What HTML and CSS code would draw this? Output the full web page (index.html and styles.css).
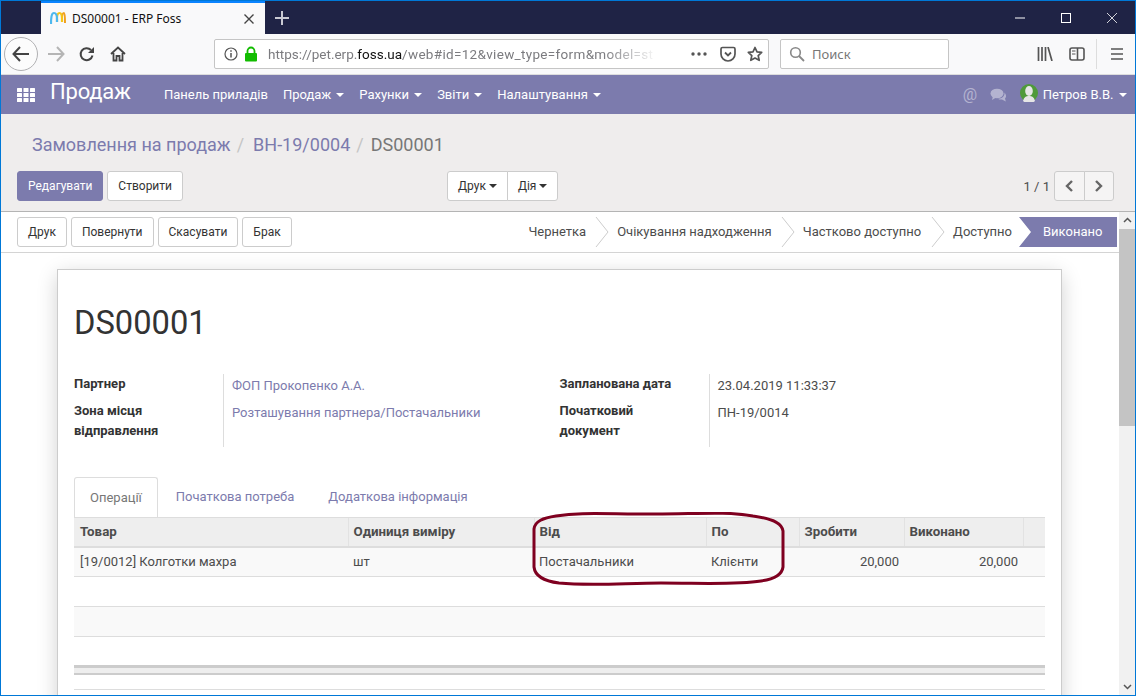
FILE: index.html
```html
<!DOCTYPE html>
<html lang="uk">
<head>
<meta charset="utf-8">
<title>DS00001 - ERP Foss</title>
<link rel="stylesheet" href="styles.css">
</head>
<body>
<div class="window">
  <div class="titlebar">
    <div class="tab">
      <svg class="favicon" width="16" height="16" viewBox="0 0 16 16"><path d="M12 8c0-4 1-6 2-6s1 6 1 10" fill="none" stroke="#f0a020" stroke-width="2"/><path d="M7 11V8c0-4 1-6 2.500-6S12 4 12 8v3" fill="none" stroke="#f5c518" stroke-width="2.200"/><path d="M1 13C1 5 2 2 4 2s3 3 3 6v3" fill="none" stroke="#4db8ee" stroke-width="2.200"/></svg>
      <span class="tab-title">DS00001 - ERP Foss</span>
      <svg class="tab-close" width="12" height="12" viewBox="0 0 12 12"><path d="M1.500 1.500l9 9M10.500 1.500l-9 9" stroke="#444" stroke-width="1.400"/></svg>
    </div>
    <svg class="newtab" width="16" height="16" viewBox="0 0 16 16"><path d="M8 1v14M1 8h14" stroke="#c9cad3" stroke-width="2"/></svg>
    <div class="winctl">
      <svg width="12" height="12" viewBox="0 0 12 12"><path d="M1 6h10" stroke="#fff"/></svg>
      <svg width="12" height="12" viewBox="0 0 12 12"><rect x="1.500" y="1.500" width="9" height="9" fill="none" stroke="#fff"/></svg>
      <svg width="12" height="12" viewBox="0 0 12 12"><path d="M1 1l10 10M11 1L1 11" stroke="#fff" stroke-width=".8"/></svg>
    </div>
  </div>
  <div class="toolbar">
    <div class="backbtn"><svg width="18" height="16" viewBox="0 0 18 16"><path d="M8 1L1.500 8 8 15M2 8h15" fill="none" stroke="#444" stroke-width="2"/></svg></div>
    <svg class="fwd" width="18" height="16" viewBox="0 0 18 16"><path d="M10 1l6.500 7L10 15M16 8H1" fill="none" stroke="#b5b5b5" stroke-width="2"/></svg>
    <svg class="reload" width="16" height="16" viewBox="0 0 16 16"><path d="M13.500 9.500A6 6 0 1 1 12 4" fill="none" stroke="#444" stroke-width="2"/><path d="M15 1v6H9z" fill="#444"/></svg>
    <svg class="home" width="16" height="16" viewBox="0 0 16 16"><path d="M1 8l7-6.500L15 8M3.500 7v7.500h3V10h3v4.500h3V7" fill="none" stroke="#444" stroke-width="1.800"/></svg>
    <div class="urlbar">
      <svg width="14" height="14" viewBox="0 0 14 14"><circle cx="7" cy="7" r="6" fill="none" stroke="#555" stroke-width="1.200"/><path d="M7 6v4.500M7 3.200v1.600" stroke="#555" stroke-width="1.500"/></svg>
      <svg class="lock" width="14" height="16" viewBox="0 0 14 16"><path d="M3.500 7V5a3.500 3.500 0 0 1 7 0v2" fill="none" stroke="#12bc00" stroke-width="1.800"/><rect x="1" y="7" width="12" height="8.500" rx="1" fill="#12bc00"/></svg>
      <span class="url">https://pet.erp.<b>foss.ua</b><span class="url-rest">/web#id=12&amp;view_type=form&amp;model=st</span></span>
      <svg class="dots" width="16" height="4" viewBox="0 0 16 4"><circle cx="2" cy="2" r="1.700" fill="#555"/><circle cx="8" cy="2" r="1.700" fill="#555"/><circle cx="14" cy="2" r="1.700" fill="#555"/></svg>
      <svg class="pocket" width="16" height="16" viewBox="0 0 16 16"><path d="M2.500 1.500h11A1.500 1.500 0 0 1 15 3v5A7 7 0 0 1 1 8V3a1.500 1.500 0 0 1 1.500-1.500z" fill="none" stroke="#555" stroke-width="1.700"/><path d="M5 6.500l3 3 3-3" fill="none" stroke="#555" stroke-width="1.800"/></svg>
      <svg class="star" width="16" height="16" viewBox="0 0 16 16"><path d="M8 1.500l2 4.400 4.700.5-3.500 3.200 1 4.700L8 12l-4.200 2.300 1-4.700L1.300 6.400 6 5.900z" fill="none" stroke="#555" stroke-width="1.700" stroke-linejoin="round"/></svg>
    </div>
    <div class="searchbar">
      <svg width="16" height="16" viewBox="0 0 16 16"><circle cx="6.500" cy="6.500" r="4.800" fill="none" stroke="#888" stroke-width="1.600"/><path d="M10 10l5 5" stroke="#888" stroke-width="1.800"/></svg>
      <span>Поиск</span>
    </div>
    <svg class="library" width="16" height="14" viewBox="0 0 16 14"><path d="M1.500 0v14M5 0v14M8.500 0v14M11 0l4 14" stroke="#555" stroke-width="1.700" fill="none"/></svg>
    <svg class="sidebar" width="16" height="14" viewBox="0 0 16 14"><rect x="1" y="1" width="14" height="12" rx="2" fill="none" stroke="#555" stroke-width="1.600"/><path d="M8.500 1v12" stroke="#555" stroke-width="1.600"/><path d="M3 4h3.500M3 7h3.500" stroke="#555"/></svg>
    <span class="tb-sep"></span>
    <svg class="burger" width="14" height="12" viewBox="0 0 14 12"><path d="M1 1h12M1 6h12M1 11h12" stroke="#555" stroke-width="1.600"/></svg>
  </div>
  <nav class="appnav">
    <svg class="apps" width="18" height="14" viewBox="0 0 18 14"><g fill="#fff"><rect width="5" height="4" rx=".5"/><rect x="6.500" width="5" height="4" rx=".5"/><rect x="13" width="5" height="4" rx=".5"/><rect y="5" width="5" height="4" rx=".5"/><rect x="6.500" y="5" width="5" height="4" rx=".5"/><rect x="13" y="5" width="5" height="4" rx=".5"/><rect y="10" width="5" height="4" rx=".5"/><rect x="6.500" y="10" width="5" height="4" rx=".5"/><rect x="13" y="10" width="5" height="4" rx=".5"/></g></svg>
    <span class="brand">Продаж</span>
    <ul class="menu">
      <li>Панель приладів</li>
      <li>Продаж<i class="caret"></i></li>
      <li>Рахунки<i class="caret"></i></li>
      <li>Звіти<i class="caret"></i></li>
      <li>Налаштування<i class="caret"></i></li>
    </ul>
    <div class="nav-right">
      <span class="at">@</span>
      <svg class="chat" width="17" height="14" viewBox="0 0 17 14"><ellipse cx="7" cy="5.500" rx="6.500" ry="4.800" fill="#b4b3d0"/><path d="M3 8L2 12l5-3z" fill="#b4b3d0"/><path d="M14.500 4.500c2 2.500 2 4.500.5 6l.8 3-3.800-2c-1.500.3-3 0-4-.8 3.500.3 7-2.500 6.500-6.200z" fill="#b4b3d0"/></svg>
      <svg class="avatar" width="18" height="18" viewBox="0 0 18 18"><circle cx="9" cy="9" r="9" fill="#4f9a3a"/><ellipse cx="9" cy="7" rx="3.800" ry="5" fill="#e6e6e6"/><path d="M3 17c1-4 3-5 6-5s5 1 6 5a9 9 0 0 1-12 0z" fill="#e6e6e6"/></svg>
      <span class="username">Петров В.В.<i class="caret"></i></span>
    </div>
  </nav>
  <header class="control">
    <ol class="breadcrumb">
      <li class="crumb-link">Замовлення на продаж</li>
      <li class="crumb-sep">/</li>
      <li class="crumb-link">ВН-19/0004</li>
      <li class="crumb-sep">/</li>
      <li class="crumb-current">DS00001</li>
    </ol>
    <div class="control-row">
      <div class="btn-set">
        <button class="btn primary">Редагувати</button>
        <button class="btn">Створити</button>
      </div>
      <div class="btn-group mid">
        <button class="btn">Друк<i class="caret dark"></i></button>
        <button class="btn">Дія<i class="caret dark"></i></button>
      </div>
      <div class="pager">
        <span class="pager-val">1 / 1</span>
        <div class="btn-group">
          <button class="btn pg"><svg width="10" height="12" viewBox="0 0 10 12"><path d="M8 1L3 6l5 5" fill="none" stroke="#666" stroke-width="2.400"/></svg></button>
          <button class="btn pg"><svg width="10" height="12" viewBox="0 0 10 12"><path d="M2 1l5 5-5 5" fill="none" stroke="#666" stroke-width="2.400"/></svg></button>
        </div>
      </div>
    </div>
  </header>
  <div class="viewport">
    <main class="content">
      <div class="statusbar">
        <div class="actions">
          <button class="btn">Друк</button>
          <button class="btn">Повернути</button>
          <button class="btn">Скасувати</button>
          <button class="btn">Брак</button>
        </div>
        <div class="steps">
          <span class="step s1">Чернетка<svg class="chev" width="14" height="30" viewBox="0 0 14 30"><path d="M1 0l12 15L1 30" fill="none" stroke="#ccc"/></svg></span>
          <span class="step s2">Очікування надходження<svg class="chev" width="14" height="30" viewBox="0 0 14 30"><path d="M1 0l12 15L1 30" fill="none" stroke="#ccc"/></svg></span>
          <span class="step s3">Частково доступно<svg class="chev" width="14" height="30" viewBox="0 0 14 30"><path d="M1 0l12 15L1 30" fill="none" stroke="#ccc"/></svg></span>
          <span class="step s4">Доступно</span>
          <span class="step current">Виконано</span>
        </div>
      </div>
      <div class="sheet-wrap">
        <section class="sheet">
          <h1>DS00001</h1>
          <div class="fields">
            <div class="group">
              <div class="lbl">Партнер</div><a class="val link">ФОП Прокопенко А.А.</a>
              <div class="lbl">Зона місця відправлення</div><a class="val link">Розташування партнера/Постачальники</a>
            </div>
            <div class="group second">
              <div class="lbl">Запланована дата</div><div class="val">23.04.2019 11:33:37</div>
              <div class="lbl">Початковий документ</div><div class="val">ПН-19/0014</div>
            </div>
          </div>
          <div class="tabs">
            <span class="tabitem active">Операції</span>
            <span class="tabitem">Початкова потреба</span>
            <span class="tabitem">Додаткова інформація</span>
          </div>
          <div class="table-wrap">
            <table>
              <colgroup><col class="c1"><col class="c2"><col class="c3"><col class="c4"><col class="c5"><col class="c6"><col class="c7"></colgroup>
              <thead><tr><th>Товар</th><th>Одиниця виміру</th><th>Від</th><th>По</th><th>Зробити</th><th>Виконано</th><th></th></tr></thead>
              <tbody>
                <tr class="odd"><td>[19/0012] Колготки махра</td><td>шт</td><td>Постачальники</td><td>Клієнти</td><td class="num">20,000</td><td class="num">20,000</td><td></td></tr>
                <tr><td colspan="7"></td></tr>
                <tr class="odd"><td colspan="7"></td></tr>
                <tr><td colspan="7"></td></tr>
              </tbody>
              <tfoot><tr class="foot"><td colspan="7"></td></tr><tr class="foot2"><td colspan="7"></td></tr></tfoot>
            </table>
            <svg class="mark" width="256" height="76" viewBox="0 0 256 76"><path d="M3 17C4 9 12 6 25 4 50 0 70 2 125 2c40 0 70-3 97 2 22 3 29 8 30 15v36c-1 8-8 12-22 14-25 4-60 2-100 2-35 0-70 3-102 0C12 69 4 64 3 55z" fill="none" stroke="#7f0020" stroke-width="3"/></svg>
          </div>
        </section>
      </div>
    </main>
    <div class="scrollbar">
      <svg width="17" height="17" viewBox="0 0 17 17"><path d="M5 10l3.500-3.500L12 10" fill="none" stroke="#555" stroke-width="1.500"/></svg>
      <div class="thumb"></div>
      <svg class="sb-down" width="17" height="17" viewBox="0 0 17 17"><path d="M5 7l3.500 3.500L12 7" fill="none" stroke="#555" stroke-width="1.500"/></svg>
    </div>
  </div>
</div>
</body>
</html>
```
FILE: styles.css
```css
* { box-sizing: border-box; }
html, body { margin: 0; height: 100%; overflow: hidden; }
body { font-family: Roboto, "Liberation Sans", sans-serif; font-size: 13px; color: #4c4c4c; background: #fff; }
svg { display: block; flex: none; }
ul, ol { list-style: none; margin: 0; padding: 0; display: flex; }
.window { width: 1136px; height: 696px; display: flex; flex-direction: column; border: 1px solid #0078d7; overflow: hidden; }

.titlebar { height: 33px; background: #1f2345; display: flex; align-items: stretch; flex: none; }
.tab { width: 224px; margin-left: 40px; background: #f9f9fa; border-top: 2px solid #0a84ff; display: flex; align-items: center; padding-left: 9px; }
.favicon { margin-right: 6px; }
.tab-title { font-family: "Noto Sans", sans-serif; font-size: 12px; color: #111; flex: 1; }
.tab-close { margin-right: 10px; }
.newtab { margin: 9px 0 0 9px; }
.winctl { margin-left: auto; display: flex; gap: 34px; align-items: center; padding-right: 17px; }

.toolbar { height: 41px; background: #f9f9fa; border-bottom: 1px solid #ddd; display: flex; align-items: center; flex: none; }
.backbtn { width: 34px; height: 34px; border: 1px solid #b1b1b3; border-radius: 50%; background: #fcfcfc; display: flex; align-items: center; justify-content: center; margin-left: 3px; }
.fwd { margin-left: 9px; }
.reload { margin-left: 14px; }
.home { margin-left: 15px; }
.urlbar { width: 555px; height: 30px; margin-left: 88px; background: #fff; border: 1px solid #c5c5c5; border-radius: 2px; display: flex; align-items: center; padding-left: 9px; }
.lock { margin-left: 6px; }
.url { font-size: 13.500px; color: #7b7b7f; width: 390px; margin-left: 10px; white-space: nowrap; overflow: hidden; -webkit-mask-image: linear-gradient(90deg, #000 86%, transparent); mask-image: linear-gradient(90deg, #000 86%, transparent); }
.url b { font-weight: 400; color: #111; }
.url-rest { letter-spacing: .32px; }
.dots { margin-left: 33px; }
.pocket { margin-left: 13px; }
.star { margin-left: 11px; }
.searchbar { width: 169px; height: 30px; margin-left: 11px; background: #fff; border: 1px solid #c5c5c5; border-radius: 2px; display: flex; align-items: center; gap: 7px; padding-left: 8px; color: #777; font-family: "Noto Sans", sans-serif; font-size: 13px; }
.library { margin-left: 88px; }
.sidebar { margin-left: 16px; }
.tb-sep { width: 1px; height: 30px; background: #ddd; margin-left: 11px; }
.burger { margin-left: 13px; }

.appnav { height: 39px; background: #7c7bad; display: flex; align-items: center; color: #fff; flex: none; }
.apps { margin-left: 16px; margin-top: 1px; }
.brand { font-size: 22px; font-weight: 400; margin-left: 15px; margin-top: -6px; width: 114px; letter-spacing: -.2px; }
.menu { gap: 15px; font-size: 13px; }
.caret { display: inline-block; width: 0; height: 0; border-left: 4px solid transparent; border-right: 4px solid transparent; border-top: 4px solid currentColor; margin-left: 5px; vertical-align: 2px; }
.caret.dark { color: #333; margin-left: 3px; }
.nav-right { margin-left: auto; display: flex; align-items: center; padding-right: 8px; }
.at { font-size: 16px; color: #b4b3d0; }
.chat { margin-left: 13px; }
.avatar { margin-left: 13px; margin-top: -3px; }
.username { margin-left: 4.500px; font-size: 13px; }
.username .caret { margin-left: 5.500px; }

.control { height: 98px; background: #efeded; border-bottom: 1px solid #b4b4b4; flex: none; padding: 0 21px 0 16px; }
.breadcrumb { font-size: 18px; padding: 20px 0 0 15px; height: 57px; line-height: 22px; }
.crumb-link { color: #7c7bad; }
.crumb-sep { color: #c5c5c5; margin: 0 9px 0 6px; }
.crumb-current { color: #777; margin-left: -2px; }
.control-row { display: flex; align-items: center; }
.btn-set { display: flex; gap: 4px; width: 430px; }
.btn { font: inherit; font-size: 12px; color: #333; height: 30px; background: #fff; border: 1px solid #ccc; border-radius: 3px; padding: 0 10px; display: inline-flex; align-items: center; justify-content: center; }
.btn.primary { background: #7c7bad; border-color: #7c7bad; color: #fff; }
.btn-group { display: flex; }
.btn-group .btn:first-child { border-radius: 3px 0 0 3px; }
.btn-group .btn:last-child { border-radius: 0 3px 3px 0; margin-left: -1px; }
.pager { margin-left: auto; display: flex; align-items: center; gap: 4px; }
.pager-val { font-size: 13px; }
.btn.pg { width: 30.500px; padding: 0; background: #f5f4f4; }

.viewport { flex: 1; display: flex; min-height: 0; }
.content { flex: 1; min-width: 0; overflow: hidden; }
.scrollbar { width: 16px; background: #f1f1f1; display: flex; flex-direction: column; flex: none; }
.thumb { height: 197px; background: #c4c4c4; }
.sb-down { margin-top: auto; }

.statusbar { height: 41px; display: flex; justify-content: space-between; align-items: center; border-bottom: 1px solid #d4d4d4; padding: 0 2px 0 16px; }
.actions { display: flex; gap: 4px; }
.steps { display: flex; height: 30px; align-items: center; }
.step { font-size: 13px; color: #4c4c4c; height: 30px; line-height: 30px; position: relative; white-space: nowrap; }
.s1, .s2 { padding-right: 31px; }
.s3 { padding-right: 32px; }
.s4 { padding-right: 7px; }
.chev { position: absolute; right: 8px; top: 0; }
.current { background: #7c7bad; color: #fff; padding-left: 24px; clip-path: polygon(0 0, 100% 0, 100% 100%, 0 100%, 12px 50%); width: 98px; }

.sheet-wrap { padding: 16px 57px 0 56px; }
.sheet { background: #fff; border: 1px solid #ccc; box-shadow: 0 5px 20px -1px rgba(0,0,0,.2); padding: 0 16px; height: 470px; }
h1 { font-size: 32.700px; font-weight: 400; color: #333; margin: 0; padding-top: 33px; line-height: 40px; height: 104px; }
.fields { display: flex; height: 73px; }
.group { display: grid; grid-template-columns: 149px 1fr; width: 486px; align-content: start; }
.lbl { font-weight: 700; color: #333; font-size: 13px; line-height: 20px; padding-right: 30px; }
.val { padding: 2px 0 5px 8px; border-left: 1px solid #ddd; font-size: 13px; line-height: 20px; }
.group .val:last-child { height: 46px; }
.link { color: #7c7bad; }
.tabs { display: flex; margin-top: 30px; height: 40px; }
.tabitem { font-size: 13px; color: #7c7bad; padding: 0 15px; line-height: 40px; margin-right: 4px; }
.tabitem.active { color: #777; background: #fff; border: 1px solid #ddd; border-bottom: 0; border-radius: 3px 3px 0 0; margin-right: 3px; line-height: 39px; }
.table-wrap { position: relative; }
table { width: 971px; table-layout: fixed; border-collapse: collapse; font-size: 13px; color: #4c4c4c; }
.c1 { width: 274px; } .c2 { width: 186px; } .c3 { width: 172px; } .c4 { width: 93px; } .c5 { width: 105px; } .c6 { width: 119px; } .c7 { width: 22px; }
th { height: 29px; background: #eee; text-align: left; font-weight: 700; font-size: 13.300px; padding: 0 5px; border-top: 1px solid #ddd; border-bottom: 2px solid #ddd; border-left: 1px solid #e2e2e2; }
th:first-child { border-left: 0; padding-left: 6px; }
td { height: 30px; padding: 0 5px; border-bottom: 1px solid #ddd; }
td:first-child { padding-left: 6px; }
.odd td { background: #f9f9f9; }
.num { text-align: right; }
.foot td { height: 7px; background: #eee; border-top: 3px solid #ccc; border-bottom: 2px solid #ccc; padding: 0; }
.foot2 td { height: 16px; padding: 0; }
.mark { position: absolute; left: 457px; top: -5px; }
```
